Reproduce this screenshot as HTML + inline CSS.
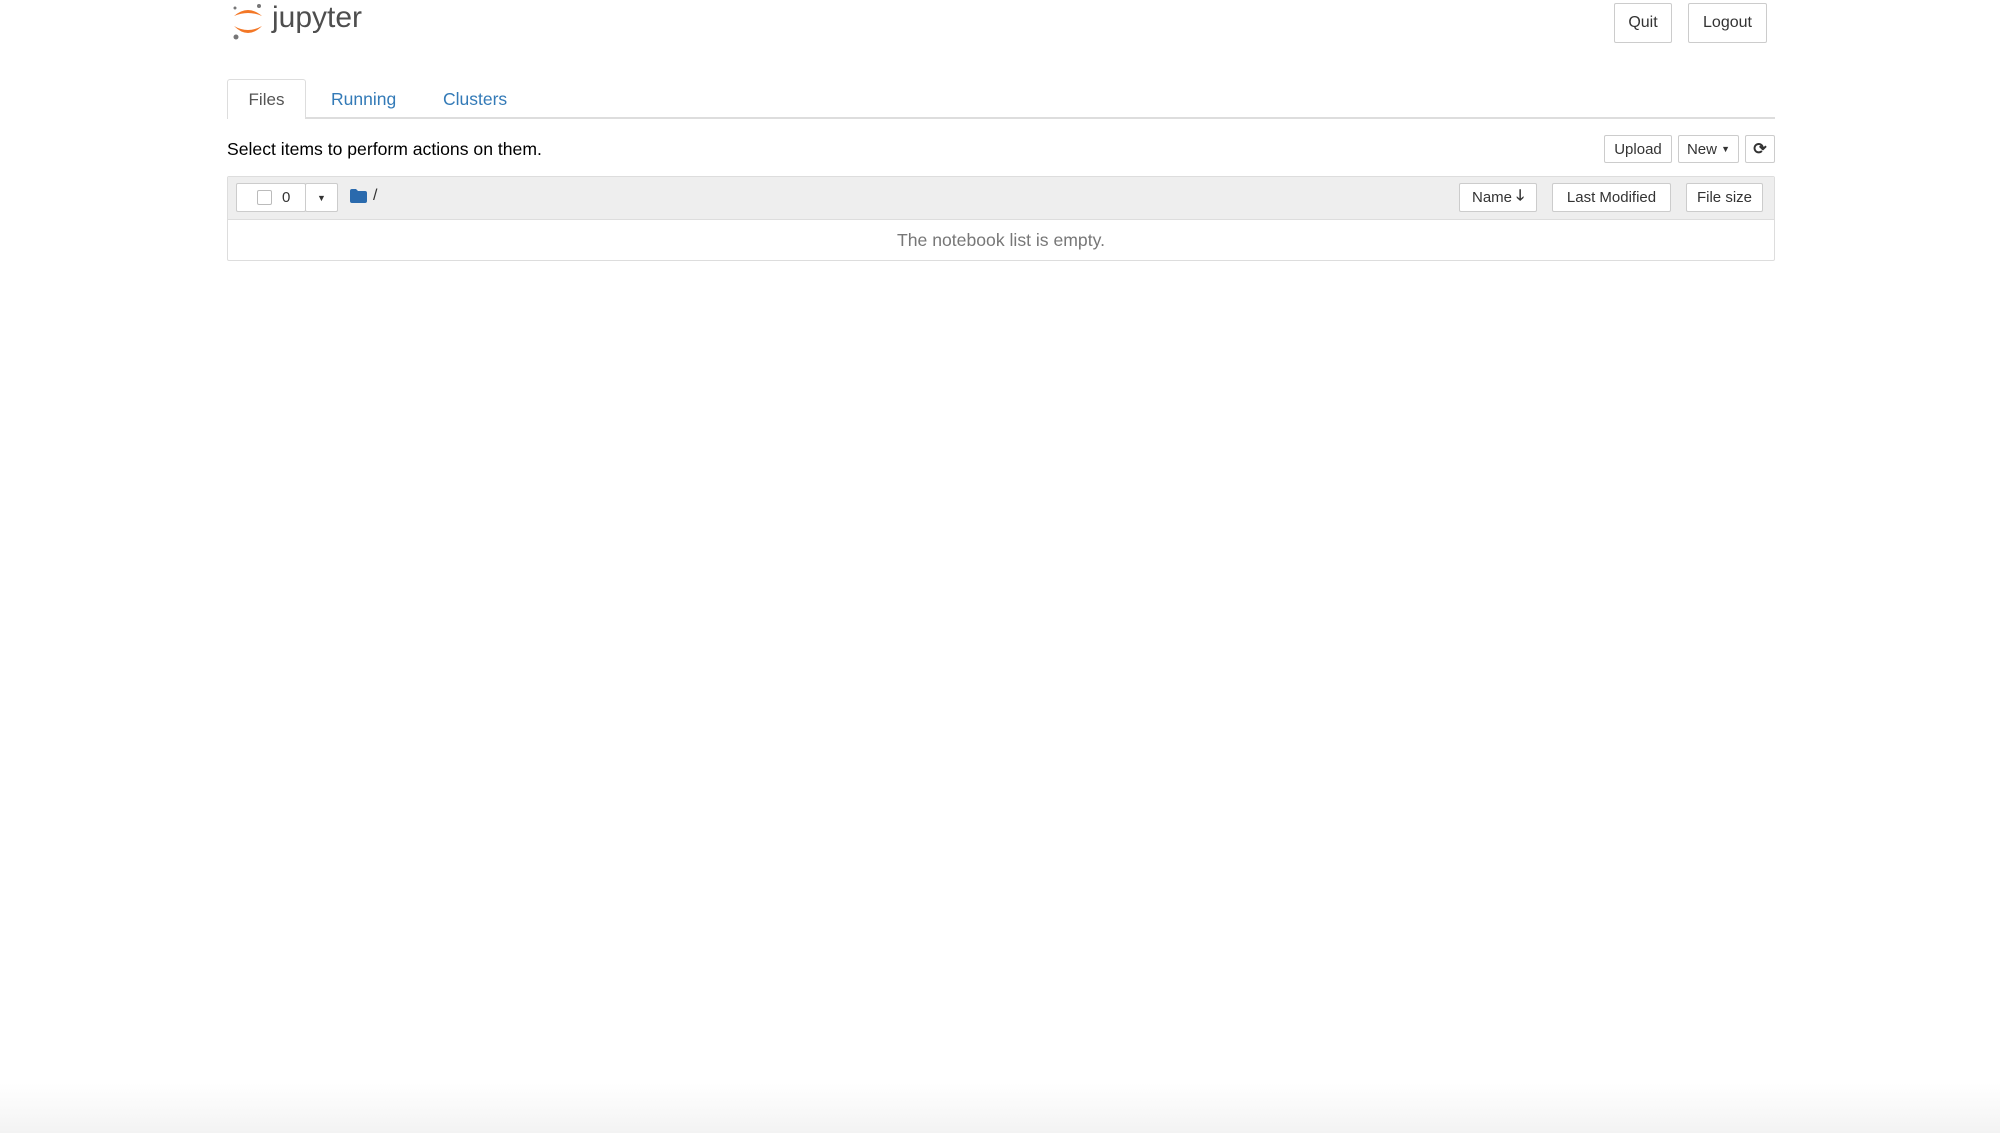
<!DOCTYPE html>
<html><head><meta charset="utf-8"><style>
*{box-sizing:border-box}
body{margin:0;width:2000px;height:1133px;background:#fff;font-family:"Liberation Sans",sans-serif;color:#333;font-size:17px;position:relative;overflow:hidden}
.a{position:absolute}
.btn{position:absolute;border:1px solid #ccc;border-radius:2px;background:#fff;display:flex;align-items:center;justify-content:center;font-size:16px;color:#333}
.bot{position:absolute;left:0;right:0;bottom:0;height:50px;background:linear-gradient(#fff,#f3f3f3)}
</style></head><body>
<svg class="a" style="left:230px;top:2px" width="36" height="40" viewBox="0 0 36 40">
<path d="M4 14 Q18 2 32 14 Q18 8 4 14Z" fill="#f37726"/>
<path d="M4 24 Q18 38 32 24 Q18 32 4 24Z" fill="#f37726"/>
<circle cx="29" cy="4" r="2" fill="#767677"/><circle cx="6" cy="35" r="2.5" fill="#767677"/><circle cx="5" cy="6" r="1.5" fill="#767677"/>
</svg>
<div class="a" style="left:272px;top:1px;font-size:30px;color:#4e4e4e">jupyter</div>
<div class="btn" style="left:1614px;top:3px;width:58px;height:40px">Quit</div>
<div class="btn" style="left:1688px;top:3px;width:79px;height:40px">Logout</div>
<div class="a" style="left:227px;top:117px;width:1548px;height:2px;background:#ddd"></div>
<div class="a" style="left:227px;top:79px;width:79px;height:40px;border:1px solid #ddd;border-bottom:none;background:#fff;border-radius:3px 3px 0 0;display:flex;align-items:center;justify-content:center;color:#555">Files</div>
<div class="a" style="left:331px;top:89px;color:#337ab7;font-size:17.5px">Running</div>
<div class="a" style="left:443px;top:89px;color:#337ab7;font-size:17.5px">Clusters</div>
<div class="a" style="left:227px;top:139px;font-size:17.6px;color:#000">Select items to perform actions on them.</div>
<div class="btn" style="left:1604px;top:135px;width:68px;height:28px;font-size:15px">Upload</div>
<div class="btn" style="left:1678px;top:135px;width:61px;height:28px;font-size:15px">New&nbsp;<span style="font-size:9px">▼</span></div>
<div class="btn" style="left:1745px;top:135px;width:30px;height:28px;font-size:16px;font-weight:bold">⟳</div>
<div class="a" style="left:227px;top:176px;width:1548px;height:85px;border:1px solid #ddd;border-radius:2px"></div>
<div class="a" style="left:228px;top:177px;width:1546px;height:43px;background:#eee;border-bottom:1px solid #ddd"></div>
<div class="btn" style="left:236px;top:183px;width:70px;height:29px;justify-content:flex-start;padding-left:20px;font-size:15px"><span style="display:inline-block;width:15px;height:15px;border:1px solid #bbb;border-radius:2px;margin-right:10px"></span>0</div>
<div class="btn" style="left:305px;top:183px;width:33px;height:29px;font-size:9px">▼</div>
<svg class="a" style="left:350px;top:189px" width="17" height="14" viewBox="0 0 17 14"><path d="M0 2Q0 0 2 0H6L8 2H15Q17 2 17 4V12Q17 14 15 14H2Q0 14 0 12Z" fill="#2a6aad"/></svg>
<div class="a" style="left:373px;top:187px;font-size:16px">/</div>
<div class="btn" style="left:1459px;top:183px;width:78px;height:29px;font-size:15px">Name&nbsp;<b>🡓</b></div>
<div class="btn" style="left:1552px;top:183px;width:119px;height:29px;font-size:15px">Last Modified</div>
<div class="btn" style="left:1686px;top:183px;width:77px;height:29px;font-size:15px">File size</div>
<div class="a" style="left:227px;top:230px;width:1548px;text-align:center;color:#777;font-size:17.6px">The notebook list is empty.</div>
<div class="bot"></div>
</body></html>
